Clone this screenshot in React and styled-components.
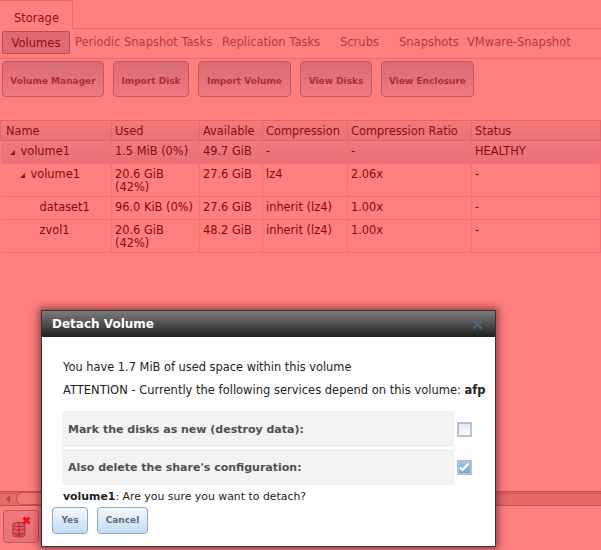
import React from 'react';
import styled, { createGlobalStyle } from 'styled-components';

const Global = createGlobalStyle`
  html, body { margin: 0; padding: 0; width: 601px; height: 550px; overflow: hidden; background: #ff7f7f; }
  * { box-sizing: border-box; }
`;
const Page = styled.div`
  position: relative; width: 601px; height: 550px; overflow: hidden;
  display: flex; flex-direction: column;
  background: #ff7f7f; color: #7f0000;
  font: 11.5px/13px "DejaVu Sans", Verdana, sans-serif;
`;
const TabBar = styled.div`display: flex; height: 29px; border-bottom: 1px solid #e66a6a;`;
const MainTab = styled.div`
  width: 73px; height: 29px; padding: 11px 0 0 14px;
  color: #8c1010; border: 1px solid #e66a6a; border-width: 1px 1px 0 0;
  border-radius: 0 3px 0 0; background: #ff7f7f;
`;
const SubBar = styled.div`
  display: flex; align-items: flex-start; height: 30px; padding: 2px 0 0 2px;
  border-bottom: 1px solid #e66a6a;
`;
const SubTab = styled.div`
  flex: none; width: ${p => p.$w}px; margin-right: ${p => p.$mr || 0}px; height: 23px;
  line-height: ${p => (p.$active ? 22 : 23)}px;
  white-space: nowrap;
  color: ${p => (p.$active ? '#8c0f0f' : '#b23a3a')};
  ${p => p.$active && `
    background: #e06a74; border: 1px solid #b94a55; border-radius: 2px; text-align: center;
  `}
`;
const ActionBar = styled.div`display: flex; gap: 9px; height: 61px; padding: 2px 0 0 2px;`;
const ActionButton = styled.div`
  width: ${p => p.$w}px; height: 36px; border: 1px solid #c85560; border-radius: 4px;
  background: linear-gradient(#d96a76, #f07a80);
  color: #b02c34; font-size: 9px; font-weight: bold; line-height: 39px; text-align: center;
  white-space: nowrap;
`;
const TableArea = styled.div`flex: 1; min-height: 0;`;
const Table = styled.table`
  border-collapse: collapse; table-layout: fixed; width: 600px; font-size: 11.4px; line-height: 13px;
  border-top: 1px solid #e06666;
`;
const HeadRow = styled.tr`
  height: 20px; background: linear-gradient(#f47a7e, #ea7076); color: #8a0f0f;
`;
const Head = styled.th`
  font-weight: normal; text-align: left; padding: 1px 3px 0 3px; width: ${p => p.$w}px; height: 20px;
  border-right: 1px solid #e56a6e; border-bottom: 1px solid #e0666b;
  &:first-child { padding-left: 5px; border-left: 1px solid #e56a6e; }
`;
const Row = styled.tr`
  ${p => p.$top && 'background: linear-gradient(#f07a80, #e87078);'}
`;
const Cell = styled.td`
  vertical-align: top; padding: 4px 3px 2px 3px; color: #870808; height: ${p => p.$h}px;
  padding-left: ${p => p.$indent || 3}px;
  border-right: 1px solid #f57070; border-bottom: 1px solid #f57070;
`;
const Arrow = styled.span`
  display: inline-block; width: 0; height: 0; margin-right: 6px; vertical-align: 0;
  border-style: solid; border-width: 0 0 5px 5px; border-color: transparent transparent #8a1a1a transparent;
`;
const ScrollBar = styled.div`
  display: flex; height: 15px; background: #e56a6a; border-top: 1px solid #c84f4f; border-bottom: 1px solid #c84f4f;
  box-shadow: inset 0 2px 2px #d55c5c;
`;
const ScrollArrow = styled.div`
  width: 16px; display: flex; align-items: center; justify-content: center;
  &::before { content: ""; border-style: solid; border-width: 4px 4px 4px 0; border-color: transparent #b84444 transparent transparent; }
`;
const ScrollThumb = styled.div`
  width: 60px; border: 1px solid #c84f4f; border-radius: 8px 0 0 8px; border-right: 0; background: #f47878;
`;
const BottomBar = styled.div`
  height: 44px; padding: 4px 0 0 3px; background: #ff7f7f;
`;
const IconButton = styled.div`
  width: 36px; height: 33px; border: 1px solid #c85560; border-radius: 4px;
  background: linear-gradient(#f07a80, #e87078);
  display: flex; align-items: center; justify-content: center;
`;
const Modal = styled.div`
  position: absolute; left: 41px; top: 310px; width: 455px; height: 237px;
  background: #fff; border: 1px solid #333;
  box-shadow: 0 0 8px 2px rgba(80, 20, 20, 0.65);
  color: #222;
  display: flex; flex-direction: column;
`;
const ModalTitle = styled.div`
  height: 26px; padding: 0 12px 0 10px; display: flex; align-items: center; justify-content: space-between;
  background: linear-gradient(#7b7b7b, #585858 40%, #2c2c2c 85%, #222);
  color: #fff; font-size: 12px; font-weight: bold;
`;
const ModalBody = styled.div`padding: 24px 0 0 21px; flex: 1; display: flex; flex-direction: column;`;
const Para = styled.div`
  height: 23px; white-space: nowrap; color: #222;
  font-size: ${p => p.$size}px; margin-bottom: ${p => p.$mb || 0}px;
`;
const OptionRow = styled.div`
  display: flex; align-items: center; height: 36px; margin-bottom: 2px;
`;
const OptionLabel = styled.div`
  width: 392px; height: 36px; margin-left: -1px; background: #f3f3f3; padding-left: 6px;
  display: flex; align-items: center; color: #4f4f4f; font-weight: bold; font-size: 11px;
`;
const Check = styled.div`
  width: 15px; height: 15px; margin-left: 3px; border: 2px solid #b9c0cc;
  background: ${p => (p.$on ? 'linear-gradient(#9fc6e6, #6fa8d6)' : 'linear-gradient(#dfeaf4, #fafcfe)')};
  display: flex; align-items: center; justify-content: center;
`;
const Confirm = styled.div`height: 20px; padding-top: 3px; color: #222; white-space: nowrap; font-size: 10.9px;`;
const ModalButtons = styled.div`display: flex; gap: 9px; margin-left: -11px;`;
const ModalButton = styled.div`
  width: ${p => p.$w}px; height: 27px; border: 1px solid #8aa9c4; border-radius: 4px;
  background: linear-gradient(#f3f8fd, #c3dcf3); color: #5f6a75;
  font-size: 9px; font-weight: bold; line-height: 25px; text-align: center;
`;

const cols = [111, 88, 63, 85, 124, 129];
const rows = [
  { top: true, h: 23, indent: 9, arrow: true, name: 'volume1', c: ['1.5 MiB (0%)', '49.7 GiB', '-', '-', 'HEALTHY'] },
  { h: 33, indent: 19, arrow: true, name: 'volume1', c: ['20.6 GiB (42%)', '27.6 GiB', 'lz4', '2.06x', '-'] },
  { h: 23, indent: 39, name: 'dataset1', c: ['96.0 KiB (0%)', '27.6 GiB', 'inherit (lz4)', '1.00x', '-'] },
  { h: 33, indent: 39, name: 'zvol1', c: ['20.6 GiB (42%)', '48.2 GiB', 'inherit (lz4)', '1.00x', '-'] },
];

const DetachIcon = () => (
  <svg width="34" height="31" viewBox="0 0 34 31">
    <g fill="#e85a62" stroke="#a82a30" strokeWidth="1">
      <path d="M9 21v3c0 1 2.7 2 6 2s6-1 6-2v-3" />
      <path d="M9 17v4c0 1 2.7 2 6 2s6-1 6-2v-4" />
      <path d="M9 14v3c0 1 2.7 2 6 2s6-1 6-2v-3" />
      <ellipse cx="15" cy="13.5" rx="6" ry="2" />
    </g>
    <path d="M15 11v15" stroke="#a82a30" strokeWidth="1" />
    <path d="M11 24h8" stroke="#a82a30" strokeWidth="1" />
    <path d="M19.5 6.5l6 6M25.5 6.5l-6 6" stroke="#ee0f1e" strokeWidth="3" />
  </svg>
);

export default function App() {
  return (
    <Page>
      <Global />
      <TabBar><MainTab>Storage</MainTab></TabBar>
      <SubBar>
        <SubTab $active $w={68} $mr={5}>Volumes</SubTab>
        <SubTab $w={147}>Periodic Snapshot Tasks</SubTab>
        <SubTab $w={118}>Replication Tasks</SubTab>
        <SubTab $w={59}>Scrubs</SubTab>
        <SubTab $w={68}>Snapshots</SubTab>
        <SubTab $w={110}>VMware-Snapshot</SubTab>
      </SubBar>
      <ActionBar>
        <ActionButton $w={102}>Volume Manager</ActionButton>
        <ActionButton $w={76}>Import Disk</ActionButton>
        <ActionButton $w={93}>Import Volume</ActionButton>
        <ActionButton $w={72}>View Disks</ActionButton>
        <ActionButton $w={93}>View Enclosure</ActionButton>
      </ActionBar>
      <TableArea>
        <Table>
          <thead>
            <HeadRow>
              {['Name', 'Used', 'Available', 'Compression', 'Compression Ratio', 'Status'].map((h, i) => (
                <Head key={h} $w={cols[i]}>{h}</Head>
              ))}
            </HeadRow>
          </thead>
          <tbody>
            {rows.map((r, i) => (
              <Row key={i} $top={r.top}>
                <Cell $h={r.h} $indent={r.indent}>{r.arrow && <Arrow />}{r.name}</Cell>
                {r.c.map((v, j) => <Cell key={j} $h={r.h} $indent={3}>{v}</Cell>)}
              </Row>
            ))}
          </tbody>
        </Table>
      </TableArea>
      <ScrollBar>
        <ScrollArrow />
        <ScrollThumb />
      </ScrollBar>
      <BottomBar>
        <IconButton><DetachIcon /></IconButton>
      </BottomBar>
      <Modal>
        <ModalTitle>
          Detach Volume
          <svg width="11" height="11" viewBox="0 0 11 11">
            <path d="M1.5 1.5l8 8M9.5 1.5l-8 8" stroke="#56677a" strokeWidth="2.4" />
          </svg>
        </ModalTitle>
        <ModalBody>
          <Para $size={11.4}>You have 1.7 MiB of used space within this volume</Para>
          <Para $size={11.5} $mb={4}>ATTENTION - Currently the following services depend on this volume: <b>afp</b></Para>
          <OptionRow>
            <OptionLabel>Mark the disks as new (destroy data):</OptionLabel>
            <Check />
          </OptionRow>
          <OptionRow>
            <OptionLabel>Also delete the share's configuration:</OptionLabel>
            <Check $on>
              <svg width="11" height="10" viewBox="0 0 11 10"><path d="M1 5.5l2.5 2.5 6-6.5" fill="none" stroke="#fff" strokeWidth="2.2" /></svg>
            </Check>
          </OptionRow>
          <Confirm><b>volume1</b>: Are you sure you want to detach?</Confirm>
          <ModalButtons>
            <ModalButton $w={36}>Yes</ModalButton>
            <ModalButton $w={51}>Cancel</ModalButton>
          </ModalButtons>
        </ModalBody>
      </Modal>
    </Page>
  );
}
